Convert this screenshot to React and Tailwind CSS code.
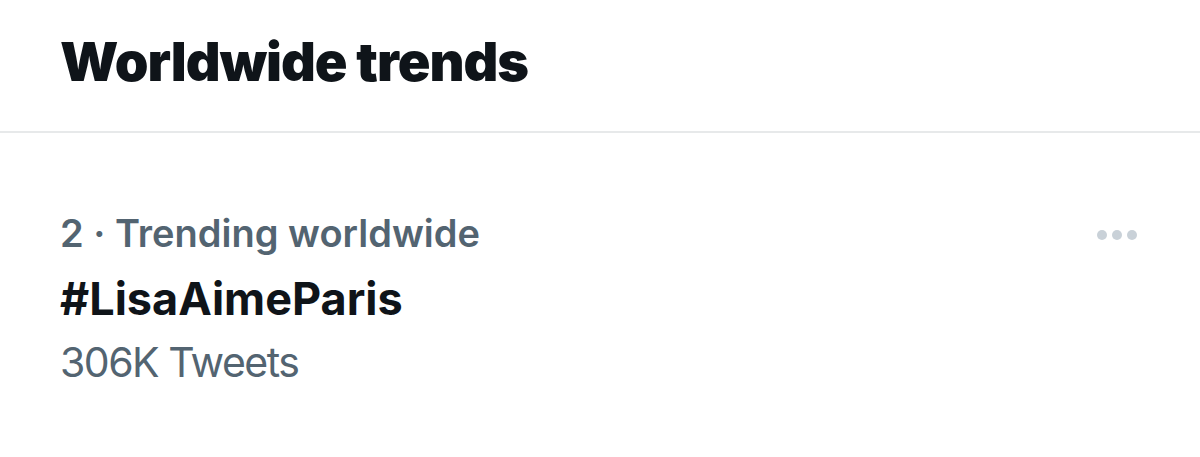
import React from "react";

const App = () => {
  return (
    <div
      className="w-[1200px] h-[457px] bg-white overflow-hidden"
      style={{ fontFamily: "Inter, 'Noto Sans', sans-serif" }}
    >
      {/* Header */}
      <div className="h-[133px] border-b-2 border-[#e7e9ea] px-[60px] pt-[30px]">
        <h1 className="text-[54px] leading-[64px] font-black text-[#0f1419] tracking-[-1px]">
          Worldwide trends
        </h1>
      </div>

      {/* Trend row */}
      <div className="flex items-start justify-between pl-[60px] pr-[63px] pt-[76px]">
        <div className="flex flex-col">
          <p className="text-[38px] leading-[48px] font-semibold text-[#536471]">
            2 · Trending worldwide
          </p>
          <p className="mt-[12px] text-[45px] leading-[60px] font-bold text-[#0f1419]">
            #LisaAimeParis
          </p>
          <p className="mt-[7px] text-[41px] leading-[52px] text-[#536471] tracking-[-1.5px]">
            306K Tweets
          </p>
        </div>
        <div className="flex items-center gap-[5px] mt-[21px]">
          <span className="w-[10px] h-[10px] rounded-full bg-[#c9d1d8]"></span>
          <span className="w-[10px] h-[10px] rounded-full bg-[#c9d1d8]"></span>
          <span className="w-[10px] h-[10px] rounded-full bg-[#c9d1d8]"></span>
        </div>
      </div>
    </div>
  );
};

export default App;
